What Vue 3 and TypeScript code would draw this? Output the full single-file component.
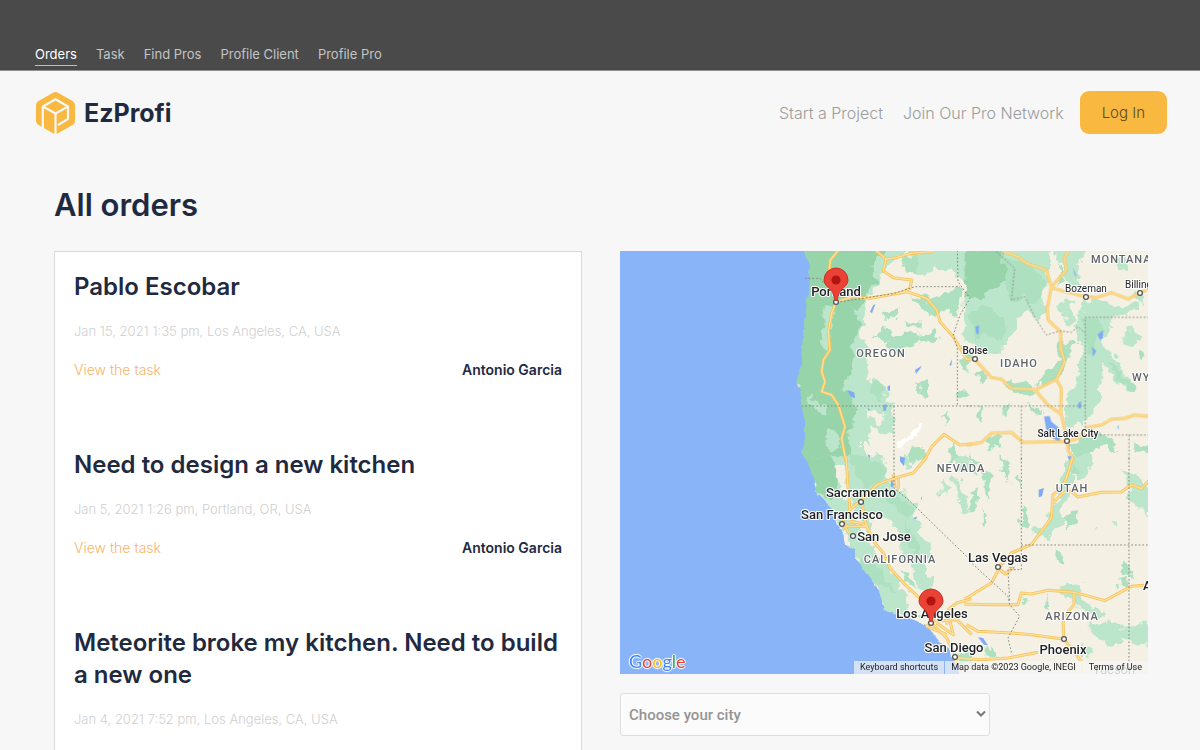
<script setup lang="ts">
import { ref } from 'vue'

interface NavItem { label: string; active?: boolean }
interface Order { id: number; title: string; meta: string; author: string }
interface Patch { tone: string; points: string }
interface Tile { x: number; y: number; patches: Patch[]; roads: string[]; borders: string[]; lakes: string[] }
interface Label { text: string; x: number; y: number; kind: string; anchor?: 'start' | 'middle' | 'end' }

const navItems: NavItem[] = [
  { label: 'Orders', active: true },
  { label: 'Task' },
  { label: 'Find Pros' },
  { label: 'Profile Client' },
  { label: 'Profile Pro' },
]

const orders: Order[] = [
  { id: 1, title: 'Pablo Escobar', meta: 'Jan 15, 2021 1:35 pm, Los Angeles, CA, USA', author: 'Antonio Garcia' },
  { id: 2, title: 'Need to design a new kitchen', meta: 'Jan 5, 2021 1:26 pm, Portland, OR, USA', author: 'Antonio Garcia' },
  { id: 3, title: 'Meteorite broke my kitchen. Need to build a new one', meta: 'Jan 4, 2021 7:52 pm, Los Angeles, CA, USA', author: 'Antonio Garcia' },
]

const cities = ['Los Angeles', 'Portland']
const city = ref('')

// Map tiles hold their shapes at three times the display scale.
const tiles: Tile[] = [
  {
    x: 170, y: -6,
    patches: [
      { tone: 'light', points: '20,10 345,10 290,60 262,130 232,165 225,200 215,270 238,330 230,400 280,420 292,440 290,475 310,480 306,560 275,570 265,550 232,540 240,600 290,650 20,650' },
      { tone: 'deep', points: '20,10 300,10 240,60 262,110 220,170 190,190 214,240 190,300 182,380 160,430 190,475 196,560 240,650 20,650' },
      { tone: 'light', points: '105,180 135,185 128,240 112,310 92,300 100,220' },
      { tone: 'light', points: '55,460 75,440 70,470 110,480 105,500 70,490' },
      { tone: 'light', points: '110,560 140,550 150,600 125,625 100,600' },
      { tone: 'light', points: '170,560 195,545 230,600 240,650 190,650' },
      { tone: 'land', points: '230,490 285,500 275,540 255,525' },
      { tone: 'land', points: '225,590 260,600 255,640 225,620' },
      { tone: 'light', points: '350,10 545,10 545,110 510,100 490,70 440,70 400,95 370,60' },
      { tone: 'mid', points: '330,30 380,40 390,90 350,80' },
      { tone: 'mid', points: '370,160 410,150 420,175 450,150 500,130 515,170 490,215 460,190 440,215 400,190' },
      { tone: 'mid', points: '250,270 285,245 300,265 350,270 420,260 450,275 430,300 390,290 345,310 330,325 280,310 290,290' },
      { tone: 'mid', points: '275,205 330,195 325,215 280,218' },
      { tone: 'mid', points: '350,232 400,225 395,245 360,243' },
      { tone: 'mid', points: '382,412 410,405 414,440 402,465 390,445' },
      { tone: 'mid', points: '512,310 545,330 545,380 515,350' },
      { tone: 'mid', points: '455,515 475,505 465,530 456,538' },
      { tone: 'mid', points: '250,410 285,430 275,470 240,440' },
      { tone: 'mid', points: '360,620 400,600 410,625 385,650 350,650' },
      { tone: 'mid', points: '505,435 525,430 530,460 510,455' },
      { tone: 'mid', points: '465,620 500,600 520,650 480,650' },
      { tone: 'snow', points: '320,605 350,565 400,530 405,545 370,580 330,615' },
    ],
    roads: [
      'M150 10L121 45L118 75L140 165L125 205L115 260L120 315L100 345L95 380L105 410L95 440L125 450L145 480L165 545L155 580L168 650',
      'M140 170L190 155L240 160L350 140L410 160L440 195L450 230L490 275L510 310L530 343L560 340',
      'M250 10L288 42L280 78L310 98L365 105L360 130L330 145',
      'M288 42L320 38L360 26L430 20',
      'M400 650L425 605L462 568L510 600L545 597',
    ],
    borders: [
      'M45 100L90 100L100 112',
      'M140 172L230 158L310 146L375 125L510 125',
      'M502 15L504 110L540 160L510 210L490 270L502 310V483',
      'M35 483H545',
      'M312 483V645',
    ],
    lakes: ['240,200 250,180 256,178 246,205', '172,435 192,442 196,460 182,455', '292,425 300,420 300,438 293,436', '280,480 290,478 288,497 280,497', '375,375 395,362 390,372 378,386', '478,360 486,343 484,362', '232,490 240,492 236,498', '232,628 242,632 238,640'],
  },
  {
    x: 348, y: -6,
    patches: [
      { tone: 'light', points: '-10,10 250,10 240,60 245,120 215,150 235,200 205,225 180,200 150,220 140,260 110,290 100,320 60,330 20,300 -10,290' },
      { tone: 'deep', points: '-10,10 100,10 135,70 125,110 100,120 60,140 30,165 -10,150' },
      { tone: 'mid', points: '100,30 190,60 235,130 200,180 170,150 130,170 110,120' },
      { tone: 'mid', points: '10,200 60,180 110,220 120,260 90,290 50,270 20,290' },
      { tone: 'light', points: '255,10 360,10 335,60 345,110 330,135 300,115 280,60' },
      { tone: 'mid', points: '270,60 290,100 270,120' },
      { tone: 'light', points: '270,180 310,170 320,220 300,245' },
      { tone: 'light', points: '320,240 350,170 400,160 440,190 500,170 510,200 430,215 440,240 405,270 410,300 450,350 505,430 480,438 430,390 400,350 402,400 390,470 350,545 300,545 290,470 330,410 322,380 345,320' },
      { tone: 'mid', points: '355,220 400,225 390,270 370,330 350,300' },
      { tone: 'mid', points: '420,350 470,390 505,432 480,430 440,390' },
      { tone: 'mid', points: '275,290 340,290 300,320 292,370 265,400 240,410 200,425 240,375 275,350' },
      { tone: 'mid', points: '100,425 130,400 195,425 190,455 140,440' },
      { tone: 'light', points: '455,270 500,240 520,280 480,300' },
      { tone: 'light', points: '440,50 480,30 470,60 445,70' },
      { tone: 'light', points: '490,140 530,150 530,180 500,170' },
      { tone: 'mid', points: '505,310 530,325 520,345 500,330' },
      { tone: 'mid', points: '340,590 360,560 430,580 445,620 400,600 345,650 310,645 300,600' },
      { tone: 'mid', points: '30,480 45,490 38,540 28,520' },
      { tone: 'mid', points: '105,490 130,480 120,510 100,515' },
      { tone: 'mid', points: '55,580 90,565 110,600 80,590 60,620' },
      { tone: 'mid', points: '175,480 215,490 235,510 200,505' },
      { tone: 'mid', points: '10,390 40,375 60,400 30,410' },
      { tone: 'mid', points: '490,590 540,600 540,625 500,615' },
    ],
    roads: [
      'M105 18L150 35L175 55L235 75L250 125L238 190L240 225L278 260L278 310L290 350L265 403L205 433L130 430L100 402L70 398L20 343',
      'M305 12L288 40L295 75L260 115L250 128L285 138L350 155L385 158L430 143L480 162L545 130',
      'M265 403L280 430L278 505',
      'M200 433L240 480L280 508L298 590L300 615L318 650',
      'M-5 600L40 592L70 565L130 562L165 592L298 590L330 580L355 547L400 540L430 522L470 520L500 510L545 514',
    ],
    borders: [
      'M85 20L140 70L130 165L170 155L205 225L235 270L275 258L310 262L330 245L352 265',
      'M352 570V217H545',
      'M-5 483H352',
      'M160 483V645',
      'M352 570H545',
      'M483 570V645',
    ],
    lakes: ['228,515 245,513 250,530 275,550 276,592 255,580 235,555', '388,268 405,255 405,280 395,284', '315,68 326,95 320,92', '372,305 385,318 375,335', '22,245 33,242 32,268 24,265', '330,475 340,468 338,490 331,490', '298,595 306,600 304,625 298,620', '448,545 453,540 450,555'],
  },
  {
    x: 170, y: 207,
    patches: [
      { tone: 'light', points: '20,-5 260,-5 300,60 320,100 385,130 370,170 400,230 430,260 402,310 432,395 392,405 365,310 322,290 340,250 312,190 250,170 240,210 290,320 355,395 345,460 270,450 260,390 220,340 180,290 160,220 130,170 90,120 60,80' },
      { tone: 'deep', points: '20,-5 135,-5 150,60 140,110 120,130 70,90' },
      { tone: 'mid', points: '175,-5 245,-5 290,55 235,95 205,60' },
      { tone: 'mid', points: '270,90 315,105 370,150 350,190 320,150' },
      { tone: 'mid', points: '340,200 365,220 395,300 380,310' },
      { tone: 'mid', points: '190,290 250,320 340,420 320,400 245,370' },
      { tone: 'mid', points: '330,340 360,345 385,390 365,385' },
      { tone: 'land', points: '138,20 165,30 180,120 215,190 300,310 395,420 375,440 345,400 280,310 210,225 172,140 148,80' },
      { tone: 'light', points: '270,420 350,440 400,480 360,475 280,460' },
      { tone: 'light', points: '455,80 475,60 465,112 450,105' },
      { tone: 'light', points: '490,60 512,70 545,175 510,155 500,115' },
      { tone: 'light', points: '340,-5 360,10 350,30 330,15' },
      { tone: 'light', points: '495,0 545,5 535,45 505,30' },
      { tone: 'mid', points: '500,590 545,580 545,620 510,620' },
    ],
    roads: [
      'M168 -5L175 100L180 155L165 180',
      'M412 -5L370 45L320 58L260 80L215 125L180 155L155 195L178 225',
      'M155 190L170 205L230 205L210 195L180 190',
      'M230 205L255 255L280 285L300 330L345 380L400 430L425 495L470 540L495 590L500 620',
      'M215 130L225 190L240 225',
      'M425 490L500 485L545 530',
      'M470 500L475 455L500 435L545 422',
      'M310 50L315 90M325 60L325 92',
      'M440 495L490 530L480 490',
      'M425 490L410 505L470 530',
    ],
    borders: ['M312 0V90L360 130L545 310'],
    lakes: ['330,-5 345,0 342,25 330,10', '302,68 312,65 310,88 303,86', '392,120 396,116 396,126', '368,180 382,176 378,184', '160,202 166,200 180,226 172,220'],
  },
  {
    x: 348, y: 207,
    patches: [
      { tone: 'mid', points: '10,-5 30,10 25,60 15,40' },
      { tone: 'mid', points: '50,30 65,60 60,130 50,100' },
      { tone: 'mid', points: '15,100 30,90 22,160 8,170' },
      { tone: 'mid', points: '100,-5 128,15 122,75 105,40' },
      { tone: 'mid', points: '150,60 162,50 160,90' },
      { tone: 'mid', points: '40,160 52,170 45,210 35,190' },
      { tone: 'mid', points: '165,150 178,165 172,205 160,190' },
      { tone: 'light', points: '305,-5 375,-5 362,50 330,68 310,45 305,120 280,135 282,200 245,235 200,232 190,200 230,210 250,170 275,80' },
      { tone: 'mid', points: '310,15 340,20 330,55 315,45' },
      { tone: 'mid', points: '280,180 330,165 325,190 295,215' },
      { tone: 'light', points: '465,20 500,60 545,75 545,170 480,120 478,60' },
      { tone: 'mid', points: '270,280 292,300 280,320 268,305' },
      { tone: 'mid', points: '462,310 494,325 488,360 460,345' },
      { tone: 'mid', points: '455,370 480,365 475,395 460,390' },
      { tone: 'light', points: '275,385 340,378 350,430 410,465 380,485 330,445 290,415' },
      { tone: 'light', points: '360,500 410,480 460,512 545,490 545,565 480,545 420,560 375,525' },
      { tone: 'mid', points: '230,412 245,430 238,455 228,440' },
      { tone: 'mid', points: '165,405 178,425 170,435' },
      { tone: 'light', points: '425,205 435,190 440,215' },
      { tone: 'light', points: '340,550 370,590 350,600' },
      { tone: 'mid', points: '45,575 75,560 82,605 50,600' },
    ],
    roads: [
      'M315 -5L295 60L280 90L255 110L250 180L190 260L130 285L100 320L70 375L45 390L0 418L-12 422',
      'M255 135L285 105L310 100L330 117L400 103L460 102L490 80L520 92L545 65',
      'M-12 438L60 440L150 440L160 405L190 408L240 397L320 403L410 428L490 385L530 382',
      'M318 403L318 440L285 480L287 542L340 610',
      'M-5 500L30 520L130 525L190 530L280 542',
      'M-30 600L40 605L120 600L210 583',
      'M90 330L112 348L135 330',
    ],
    borders: [
      'M160 0V335L120 335L125 430',
      'M160 261H545',
      'M483 0V610',
      'M5 310L120 415L125 440L155 475L120 540L132 590',
    ],
    lakes: ['298,-5 310,-5 305,8', '212,95 228,90 222,115 212,118', '375,220 388,206 386,210', '30,538 45,540 60,562 48,560', '120,328 140,326 138,334'],
  },
]

const labels: Label[] = [
  { text: 'Portland', x: 216, y: 45, kind: 'city' },
  { text: 'Boise', x: 355, y: 103, kind: 'town bold' },
  { text: 'Bozeman', x: 466, y: 41, kind: 'town' },
  { text: 'Billings', x: 505, y: 37, kind: 'town', anchor: 'start' },
  { text: 'Salt Lake City', x: 448, y: 186, kind: 'town bold' },
  { text: 'Sacramento', x: 241, y: 246, kind: 'city' },
  { text: 'San Francisco', x: 222, y: 268, kind: 'city' },
  { text: 'San Jose', x: 264, y: 290, kind: 'city' },
  { text: 'Las Vegas', x: 378, y: 311, kind: 'city' },
  { text: 'Los Angeles', x: 312, y: 367, kind: 'city' },
  { text: 'San Diego', x: 334, y: 401, kind: 'city' },
  { text: 'Phoenix', x: 443, y: 403, kind: 'city' },
  { text: 'Albuquerque', x: 523, y: 339, kind: 'city', anchor: 'start' },
  { text: 'Tucson', x: 494, y: 423, kind: 'faint' },
  { text: 'OREGON', x: 261, y: 106, kind: 'state' },
  { text: 'IDAHO', x: 399, y: 116, kind: 'state' },
  { text: 'MONTANA', x: 471, y: 12, kind: 'state', anchor: 'start' },
  { text: 'WYOMING', x: 512, y: 130, kind: 'state', anchor: 'start' },
  { text: 'NEVADA', x: 341, y: 221, kind: 'state' },
  { text: 'UTAH', x: 452, y: 241, kind: 'state' },
  { text: 'CALIFORNIA', x: 280, y: 312, kind: 'state' },
  { text: 'ARIZONA', x: 452, y: 369, kind: 'state' },
]

const dots: [number, number][] = [
  [216, 51], [355, 108], [466, 46], [520, 42], [447, 190], [241, 251], [222, 273],
  [233, 285], [378, 316], [311, 372], [335, 406], [444, 388],
]

const pins: [number, number][] = [[216, 50], [311, 371]]
</script>

<template>
  <div class="page">
    <nav class="topbar" aria-label="Sections">
      <a v-for="item in navItems" :key="item.label" href="#" :class="{ active: item.active }">{{ item.label }}</a>
    </nav>

    <header class="header">
      <a href="#" class="brand">
        <svg class="logo" viewBox="0 0 39 42" aria-hidden="true">
          <path d="M17 .8Q19.500-.6 22 .8L36.500 9Q39 10.500 39 13.200V29Q39 31.600 36.500 33L22 41.300Q19.500 42.600 17 41.300L2.500 33Q0 31.600 0 29V13.200Q0 10.500 2.500 9Z" fill="#f9b83f" />
          <path d="M6.800 37V14.500L19.500 7.200L32 14.500V27L22 33M6.800 14.500L19.500 21.500L32 14.500M19.500 21.500V43" fill="none" stroke="#f7f7f7" stroke-width="2.200" stroke-linejoin="round" />
        </svg>
        <span>EzProfi</span>
      </a>
      <div class="actions">
        <a href="#">Start a Project</a>
        <a href="#">Join Our Pro Network</a>
        <button type="button">Log In</button>
      </div>
    </header>

    <main class="content">
      <h1>All orders</h1>
      <div class="columns">
        <section class="orders" aria-label="Orders">
          <article v-for="order in orders" :key="order.id" class="order">
            <h2>{{ order.title }}</h2>
            <p class="meta">{{ order.meta }}</p>
            <div class="row">
              <a href="#">View the task</a>
              <strong>{{ order.author }}</strong>
            </div>
          </article>
        </section>

        <aside class="side">
          <div class="map">
            <svg viewBox="0 0 528 423" role="img" aria-label="Map of orders">
              <defs>
                <filter id="ragged" x="-5%" y="-5%" width="110%" height="110%">
                  <feTurbulence type="fractalNoise" baseFrequency="0.09" numOctaves="3" seed="4" result="noise" />
                  <feDisplacementMap in="SourceGraphic" in2="noise" scale="15" xChannelSelector="R" yChannelSelector="G" />
                </filter>
                <filter id="coast" x="-5%" y="-5%" width="110%" height="110%">
                  <feTurbulence type="fractalNoise" baseFrequency="0.12" numOctaves="2" seed="9" result="noise" />
                  <feDisplacementMap in="SourceGraphic" in2="noise" scale="4" xChannelSelector="R" yChannelSelector="G" />
                </filter>
              </defs>
              <rect width="528" height="423" fill="#f4f0e4" />
              <g filter="url(#ragged)">
                <g v-for="(tile, t) in tiles" :key="t" :transform="`translate(${tile.x} ${tile.y}) scale(0.33333)`">
                  <polygon v-for="(patch, i) in tile.patches" :key="i" :class="patch.tone" :points="patch.points" />
                </g>
              </g>
              <path
                filter="url(#coast)"
                fill="#8ab4f8"
                d="M-20 -20H184V0L186 8L190 15L188 21L190 28L187 48L185 71L182 95L181 111L178 126L176 132L180 138L181 154L185 171V188L181 201L186 210L190 217L195 234L197 243L205 249L213 262L217 274L223 282L225 294L235 299V308L247 322L258 337L262 350L264 359L277 364L287 366L299 371L307 374L312 381L320 391L331 400L332 407L337 411L343 445H-20Z"
              />
              <g v-for="(tile, t) in tiles" :key="'roads' + t" :transform="`translate(${tile.x} ${tile.y}) scale(0.33333)`">
                <polygon v-for="(lake, i) in tile.lakes" :key="'l' + i" class="lake" :points="lake" />
                <path v-for="(road, i) in tile.roads" :key="'c' + i" class="casing" :d="road" />
                <path v-for="(road, i) in tile.roads" :key="'r' + i" class="road" :d="road" />
                <path v-for="(border, i) in tile.borders" :key="'b' + i" class="border" :d="border" />
              </g>
              <circle v-for="(dot, i) in dots" :key="'d' + i" :cx="dot[0]" :cy="dot[1]" r="2.400" fill="#fff" stroke="#555" stroke-width="1.300" />
              <text v-for="label in labels" :key="label.text" :x="label.x" :y="label.y" :class="label.kind" :text-anchor="label.anchor ?? 'middle'">{{ label.text }}</text>
              <g v-for="(pin, i) in pins" :key="'p' + i" :transform="`translate(${pin[0]} ${pin[1]})`">
                <path d="M0 0C-1.500 0-1.600-4.500-3.500-8.500C-6-13-12-15.500-12-21A12 12 0 0 1 12-21C12-15.500 6-13 3.500-8.500C1.600-4.500 1.500 0 0 0Z" fill="#ea4335" stroke="#c5221f" stroke-width=".8" />
                <circle cy="-21" r="4.600" fill="#b31412" />
              </g>
            </svg>
            <a href="#" class="google" aria-label="Google"><i class="b">G</i><i class="r">o</i><i class="y">o</i><i class="b">g</i><i class="g">l</i><i class="r">e</i></a>
            <div class="credits">
              <button type="button">Keyboard shortcuts</button>
              <span>Map data ©2023 Google, INEGI</span>
              <a href="#">Terms of Use</a>
            </div>
          </div>

          <div class="picker">
            <select v-model="city" aria-label="Choose your city">
              <option value="">Choose your city</option>
              <option v-for="name in cities" :key="name" :value="name">{{ name }}</option>
            </select>
            <svg viewBox="0 0 10 8" aria-hidden="true"><path d="M1 1.500L5 5.500L9 1.500" /></svg>
          </div>
        </aside>
      </div>
    </main>
  </div>
</template>

<style>
html {
  scrollbar-width: none;
}
body {
  margin: 0;
  background: #f7f7f7;
}
</style>

<style scoped>
.page {
  min-height: 100vh;
  color: #1f2a40;
  background: #f7f7f7;
  font-family: Inter, "Open Sans", sans-serif;
}
a {
  color: inherit;
  text-decoration: none;
}
.topbar {
  display: flex;
  align-items: flex-end;
  gap: 19px;
  box-sizing: border-box;
  height: 71px;
  padding: 0 35px 4px;
  border-bottom: 1px solid #8f8f8f;
  background: #4a4a4a;
  color: #c4c4c4;
  font-size: 13px;
  line-height: 22px;
}
.topbar a {
  border-bottom: 1px solid transparent;
}
.topbar a.active {
  border-bottom-color: #f9b83f;
  color: #fff;
}
.header {
  display: flex;
  align-items: center;
  justify-content: space-between;
  padding: 20px 33px 0 36px;
}
.brand {
  display: flex;
  align-items: center;
  gap: 9px;
  font-size: 25px;
  font-weight: 700;
  line-height: 32px;
}
.logo {
  width: 39px;
  height: 42px;
}
.actions {
  display: flex;
  align-items: center;
  gap: 20px;
  color: #9c9c9c;
  font-size: 16px;
  font-weight: 300;
}
.actions button {
  margin-left: -4px;
  padding: 0 22px;
  border: 0;
  border-radius: 9px;
  background: #f9b83f;
  color: #5a4a23;
  font: inherit;
  font-size: 15px;
  line-height: 43px;
}
.content {
  padding: 47px 52px 40px 54px;
}
h1 {
  margin: 0;
  font-size: 31px;
  font-weight: 600;
  line-height: 48px;
}
.columns {
  display: grid;
  grid-template-columns: 1fr 1fr;
  gap: 38px;
  align-items: start;
  margin-top: 22px;
}
.orders {
  display: flex;
  flex-direction: column;
  gap: 69px;
  padding: 19px 19px 40px;
  border: 1px solid #dadada;
  background: #fff;
}
h2 {
  margin: 0;
  font-size: 24px;
  font-weight: 600;
  line-height: 32px;
}
.meta {
  margin: 18px 0 19px;
  color: #d0d0d0;
  font-size: 13px;
  font-weight: 300;
  line-height: 20px;
}
.row {
  display: flex;
  justify-content: space-between;
  font-size: 14px;
  line-height: 20px;
}
.row a {
  color: #f6b568;
  font-weight: 300;
}
.row strong {
  font-weight: 600;
}
.side {
  display: flex;
  flex-direction: column;
  gap: 19px;
}
.map {
  position: relative;
  overflow: hidden;
}
.map > svg {
  display: block;
  width: 100%;
}
.light { fill: #bce6cb; }
.mid { fill: #ace0bf; }
.deep { fill: #97d4a9; }
.land { fill: #f4f0e4; }
.snow { fill: #fff; }
.lake { fill: #7dabf5; }
.casing {
  fill: none;
  stroke: #f5c45e;
  stroke-width: 9;
  stroke-linejoin: round;
}
.road {
  fill: none;
  stroke: #ffe09a;
  stroke-width: 4;
  stroke-linejoin: round;
}
.border {
  fill: none;
  stroke: #85857f;
  stroke-width: 3;
  stroke-dasharray: 5 6;
}
.map text {
  fill: #202124;
  stroke: #fff;
  stroke-width: 2px;
  paint-order: stroke;
  stroke-linejoin: round;
  font-family: Roboto, sans-serif;
}
.map .city {
  font-size: 13px;
  font-weight: 500;
}
.map .town {
  font-size: 10px;
}
.map .bold {
  font-weight: 500;
}
.map .state {
  fill: #5f6368;
  font-size: 11px;
  font-weight: 500;
  letter-spacing: 1px;
}
.map .faint {
  fill: #80807c;
  font-size: 13px;
}
.google {
  position: absolute;
  left: 9px;
  bottom: 2px;
  font-family: Lato, sans-serif;
  font-size: 18px;
  line-height: 22px;
  text-shadow: 0 0 1px #fff, 1px 0 1px #fff, -1px 0 1px #fff, 0 1px 1px #fff, 0 -1px 1px #fff;
}
.google i {
  font-style: normal;
}
.b { color: #4285f4; }
.r { color: #ea4335; }
.y { color: #fbbc05; }
.g { color: #34a853; }
.credits {
  position: absolute;
  right: 0;
  bottom: 0;
  display: flex;
  gap: 1px;
  color: #222;
  font-family: Roboto, sans-serif;
  font-size: 9px;
  line-height: 13px;
}
.credits > * {
  padding: 0 6px;
  border: 0;
  background: rgba(245, 245, 245, 0.7);
  color: inherit;
  font: inherit;
}
.picker {
  position: relative;
  width: 70%;
}
select {
  display: block;
  box-sizing: border-box;
  width: 100%;
  height: 43px;
  padding: 0 8px;
  border: 1px solid #dedede;
  border-radius: 3px;
  appearance: none;
  background: #fbfbfb;
  color: #949494;
  font-family: Roboto, sans-serif;
  font-size: 15px;
  font-weight: 500;
}
.picker svg {
  position: absolute;
  top: 17px;
  right: 4px;
  width: 10px;
  height: 8px;
  fill: none;
  stroke: #777;
  stroke-width: 2;
  pointer-events: none;
}
</style>
